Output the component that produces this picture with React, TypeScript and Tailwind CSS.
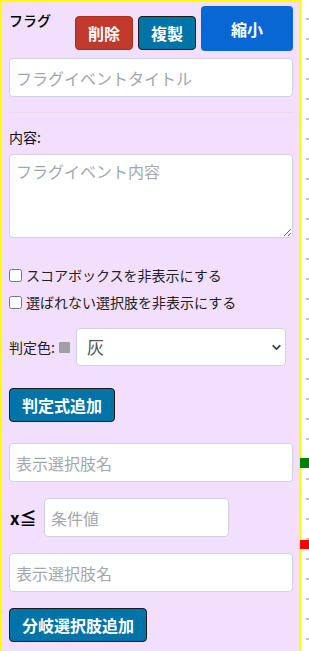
import { ChevronDown } from "lucide-react";

const inputCls =
  "block h-[39px] rounded-[4px] border border-[#ced4da] bg-white px-[6px] text-[16px] text-[#333] placeholder:text-[#a3a7ad] outline-none";

const FlagPanel = () => {
  return (
    <div className="w-[301px] shrink-0 border-2 border-b-0 border-[#ffff00] bg-[#f2dffd] pt-[4px] pl-[7px] pr-[6px] pb-[10px]">
      <div className="flex items-start">
        <span className="mt-[4px] text-[14px] font-medium leading-[20px] text-black">
          フラグ
        </span>
        <div className="ml-auto flex items-start">
          <button className="mt-[10px] h-[34px] w-[58px] rounded-[4px] border border-[#a8301f] bg-[#c0392b] text-[16px] font-bold text-white">
            削除
          </button>
          <button className="ml-[5px] mt-[10px] h-[34px] w-[58px] rounded-[4px] border border-[#1a1a1a] bg-[#0074a6] text-[16px] font-bold text-white">
            複製
          </button>
          <button className="ml-[5px] h-[45px] w-[92px] rounded-[4px] bg-[#0867d2] text-[16px] font-bold text-white">
            縮小
          </button>
        </div>
      </div>

      <input className={`${inputCls} mt-[7px] w-full`} placeholder="フラグイベントタイトル" />

      <div className="mt-[15px] border-t border-[#e6dbe9]" />

      <div className="mt-[14px] text-[14px] leading-[20px] text-[#111]">内容:</div>
      <textarea
        className="mt-[7px] block h-[84px] w-full rounded-[4px] border border-[#ced4da] bg-white px-[6px] py-[4px] text-[16px] leading-[24px] placeholder:text-[#a3a7ad] outline-none"
        placeholder="フラグイベント内容"
      />

      <div className="mt-[24px]">
        <label className="flex h-[27px] items-center gap-[4px] text-[14px] text-[#222]">
          <input type="checkbox" className="h-[13px] w-[13px]" />
          スコアボックスを非表示にする
        </label>
        <label className="flex h-[27px] items-center gap-[4px] text-[14px] text-[#222]">
          <input type="checkbox" className="h-[13px] w-[13px]" />
          選ばれない選択肢を非表示にする
        </label>
      </div>

      <div className="mt-[12px] flex items-center">
        <span className="text-[14px] text-[#222]">判定色:</span>
        <span className="ml-[4px] h-[11px] w-[11px] rounded-[1px] bg-[#a0a0a0]" />
        <div className="relative ml-[6px]">
          <select className="block h-[38px] w-[210px] appearance-none rounded-[4px] border border-[#ced4da] bg-white pl-[10px] text-[17px] text-[#555] outline-none">
            <option>灰</option>
          </select>
          <ChevronDown
            className="pointer-events-none absolute right-[3px] top-[13px] text-[#444]"
            size={13}
            strokeWidth={3.5}
          />
        </div>
      </div>

      <button className="mt-[22px] h-[34px] rounded-[4px] border border-[#1a1a1a] bg-[#0074a6] px-[12px] text-[16px] font-bold text-white">
        判定式追加
      </button>

      <input className={`${inputCls} mt-[21px] w-full`} placeholder="表示選択肢名" />

      <div className="mt-[16px] flex items-center">
        <span className="ml-[1px] w-[34px] text-[17px] font-bold text-black">x≦</span>
        <input className={`${inputCls} w-[185px]`} placeholder="条件値" />
      </div>

      <input className={`${inputCls} mt-[16px] w-full`} placeholder="表示選択肢名" />

      <button className="mt-[16px] h-[34px] rounded-[4px] border border-[#1a1a1a] bg-[#0074a6] px-[12px] text-[16px] font-bold text-white">
        分岐選択肢追加
      </button>
    </div>
  );
};

const dots = Array.from({ length: 33 }, (_, i) => i);

const App = () => {
  return (
    <div
      className="flex h-[651px] w-[309px] overflow-hidden bg-white"
      style={{ fontFamily: '"Noto Sans CJK JP", "Noto Sans", sans-serif' }}
    >
      <FlagPanel />
      <div className="relative flex-1 border-l border-[#ececec]">
        <div className="flex flex-col gap-[18px] pt-[18px] pl-[4px]">
          {dots.map((i) => (
            <span key={i} className="h-[2px] w-[3px] bg-[#c4c4c4]" />
          ))}
        </div>
        <div className="absolute left-[-2px] top-[458px] h-[10px] w-[10px] bg-[#008000]" />
        <div className="absolute left-[-2px] top-[540px] h-[9px] w-[10px] bg-[#ff0000]" />
      </div>
    </div>
  );
};

export default App;
